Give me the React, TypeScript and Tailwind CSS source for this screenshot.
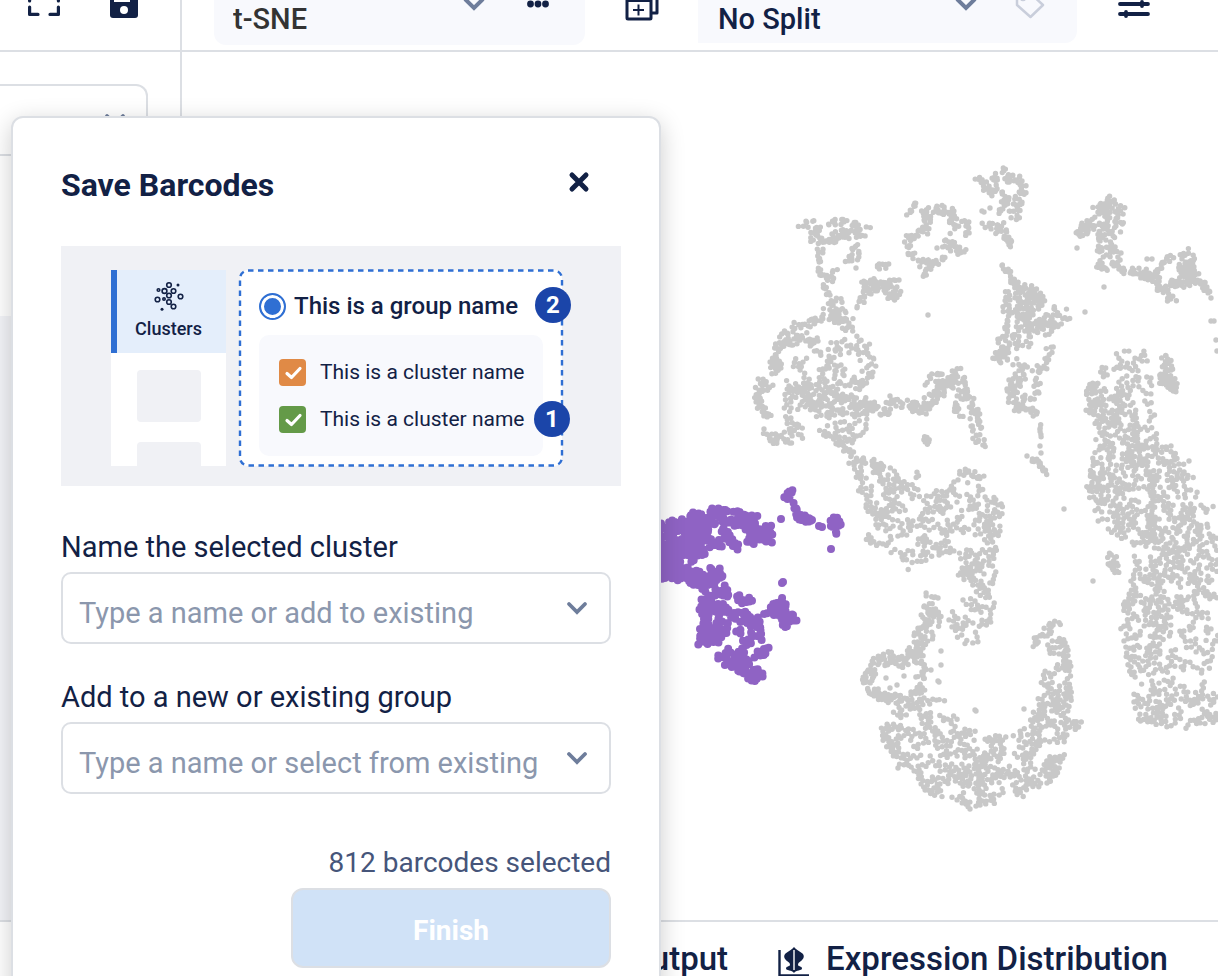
import React from "react";

type Pt = [number, number];
type Shape =
  | { kind: "area"; pts: Pt[]; n: number }
  | { kind: "line"; pts: Pt[]; w: number; n: number };

const area = (n: number, ...pts: Pt[]): Shape => ({ kind: "area", pts, n });
const line = (n: number, w: number, ...pts: Pt[]): Shape => ({ kind: "line", pts, w, n });

function makeRandom(seed: number) {
  let s = seed;
  return () => {
    s = (s + 0x6d2b79f5) | 0;
    let t = Math.imul(s ^ (s >>> 15), 1 | s);
    t = (t + Math.imul(t ^ (t >>> 7), 61 | t)) ^ t;
    return ((t ^ (t >>> 14)) >>> 0) / 4294967296;
  };
}

function inside(x: number, y: number, pts: Pt[]) {
  let hit = false;
  for (let i = 0, j = pts.length - 1; i < pts.length; j = i++) {
    const [xi, yi] = pts[i];
    const [xj, yj] = pts[j];
    if (yi > y !== yj > y && x < ((xj - xi) * (y - yi)) / (yj - yi) + xi) hit = !hit;
  }
  return hit;
}

/* Areas grow in short chains of neighbouring dots; lines spread dots evenly along their length. */
function scatter(shapes: Shape[], seed: number): Pt[] {
  const rnd = makeRandom(seed);
  const out: Pt[] = [];
  for (const s of shapes) {
    if (s.kind === "area") {
      const xs = s.pts.map((p) => p[0]);
      const ys = s.pts.map((p) => p[1]);
      const x0 = Math.min(...xs), x1 = Math.max(...xs);
      const y0 = Math.min(...ys), y1 = Math.max(...ys);
      const own: Pt[] = [];
      for (let t = 0; own.length < s.n && t < s.n * 20; t++) {
        let x = x0 + rnd() * (x1 - x0);
        let y = y0 + rnd() * (y1 - y0);
        if (own.length > 0 && rnd() < 0.5) {
          const from = own[own.length - 1];
          const angle = rnd() * Math.PI * 2;
          const reach = 3.5 + rnd() * 2;
          x = from[0] + Math.cos(angle) * reach;
          y = from[1] + Math.sin(angle) * reach;
        }
        if (!inside(x, y, s.pts)) continue;
        if (own.some((p) => Math.hypot(p[0] - x, p[1] - y) < 2.6)) continue;
        own.push([x, y]);
      }
      out.push(...own);
    } else {
      const lens = s.pts.slice(1).map((p, i) => Math.hypot(p[0] - s.pts[i][0], p[1] - s.pts[i][1]));
      const total = lens.reduce((a, b) => a + b, 0);
      const count = Math.round(s.n * 1.25);
      const w = s.w * 1.3;
      for (let k = 0; k < count; k++) {
        let d = ((k + rnd()) / count) * total;
        let i = 0;
        while (i < lens.length - 1 && d > lens[i]) d -= lens[i++];
        const f = d / lens[i];
        const a = s.pts[i], b = s.pts[i + 1];
        out.push([
          a[0] + (b[0] - a[0]) * f + (rnd() - 0.5) * w,
          a[1] + (b[1] - a[1]) * f + (rnd() - 0.5) * w,
        ]);
      }
    }
  }
  return out;
}

const toPath = (pts: Pt[]) => pts.map(([x, y]) => `M${x.toFixed(1)} ${y.toFixed(1)}h0`).join("");

const greyShapes: Shape[] = [
  line(18, 5, [978, 176], [985, 186], [991, 193], [1003, 191]),
  line(8, 5, [989, 178], [996, 176], [992, 186]),
  line(4, 3, [1001, 171], [1005, 168]),
  line(38, 8, [1004, 176], [1012, 180], [1023, 183], [1020, 192], [1018, 206], [1013, 218]),
  line(11, 6, [1009, 196], [1001, 213]),
  line(14, 6, [985, 227], [1003, 226]),
  line(16, 7, [997, 229], [1009, 238], [1006, 246]),
  line(18, 7, [801, 224], [818, 226], [822, 236], [808, 237]),
  line(36, 8, [818, 246], [827, 240], [840, 232], [855, 236], [868, 231]),
  line(16, 5, [826, 223], [845, 222], [857, 223], [857, 232]),
  line(14, 6, [855, 246], [856, 258], [848, 259]),
  line(22, 5, [821, 254], [819, 273], [832, 280], [835, 270]),
  line(7, 3, [822, 285], [829, 295]),
  line(9, 3, [908, 213], [917, 202]),
  line(32, 8, [925, 220], [929, 212], [940, 209], [953, 212], [954, 230]),
  line(10, 4, [962, 220], [968, 222], [968, 236]),
  line(24, 8, [947, 242], [955, 248], [965, 250]),
  line(30, 7, [926, 214], [925, 233], [907, 239], [911, 251], [907, 260]),
  line(22, 7, [918, 262], [930, 265], [927, 275]),
  line(9, 5, [930, 266], [945, 258]),
  line(6, 4, [875, 262], [891, 265], [876, 270]),
  line(44, 11, [866, 288], [882, 284], [897, 296]),
  line(6, 3, [882, 281], [896, 282]),
  line(13, 5, [859, 308], [867, 287]),
  line(46, 11, [840, 302], [826, 314], [845, 318], [850, 330]),
  line(38, 7, [818, 320], [795, 327], [780, 343], [774, 358], [774, 376]),
  line(28, 8, [780, 344], [808, 337], [820, 350]),
  area(45, [772, 358], [830, 352], [840, 400], [785, 385]),
  line(68, 12, [832, 346], [865, 348], [870, 370], [862, 388], [840, 376], [830, 352]),
  line(14, 6, [756, 391], [770, 387], [757, 378]),
  line(24, 7, [757, 392], [762, 408], [768, 418]),
  area(62, [785, 382], [825, 384], [845, 390], [845, 400], [800, 414], [783, 414]),
  area(58, [800, 395], [845, 390], [880, 400], [880, 415], [820, 418]),
  line(36, 9, [767, 432], [780, 442], [798, 433], [788, 418]),
  area(52, [815, 414], [870, 402], [868, 432], [850, 445], [820, 436]),
  line(32, 9, [836, 440], [852, 458], [870, 465], [885, 470]),
  line(28, 7, [860, 404], [885, 412], [890, 399], [898, 403]),
  line(26, 9, [905, 403], [912, 408], [932, 409]),
  line(32, 10, [929, 380], [943, 379], [936, 398], [928, 400]),
  line(66, 9, [945, 392], [959, 372], [963, 388], [974, 406], [975, 425], [982, 446]),
  line(10, 6, [955, 398], [960, 416]),
  line(7, 4, [925, 436], [926, 443], [931, 442]),
  line(13, 4, [1002, 264], [1012, 275], [1012, 286]),
  area(70, [1005, 288], [1013, 280], [1040, 288], [1048, 303], [1030, 318], [1002, 312]),
  line(48, 12, [1035, 330], [1050, 324], [1062, 314]),
  area(32, [1015, 306], [1042, 322], [1036, 348], [1010, 352]),
  line(9, 3, [1008, 314], [1006, 332]),
  line(40, 9, [1010, 336], [1002, 346], [996, 360], [1008, 356]),
  line(24, 6, [1051, 346], [1046, 364], [1036, 372], [1037, 398]),
  line(42, 10, [1018, 364], [1024, 370], [1013, 384], [1012, 398], [1028, 404]),
  line(14, 5, [1015, 409], [1028, 409], [1036, 416]),
  line(5, 2, [1041, 424], [1041, 436]),
  line(11, 4, [1030, 460], [1039, 462], [1046, 474]),
  line(32, 8, [1094, 216], [1105, 204], [1114, 201], [1120, 210], [1120, 230]),
  line(26, 9, [1080, 233], [1086, 228], [1093, 224]),
  line(54, 15, [1106, 208], [1108, 230], [1105, 252], [1112, 260]),
  line(9, 5, [1098, 264], [1106, 268]),
  line(13, 6, [1113, 262], [1124, 274], [1134, 272]),
  line(42, 7, [1133, 272], [1150, 275], [1160, 286], [1173, 298]),
  line(14, 5, [1152, 274], [1165, 262], [1173, 257]),
  line(48, 13, [1186, 256], [1187, 270], [1191, 282]),
  line(13, 6, [1170, 282], [1184, 284]),
  line(20, 6, [1190, 280], [1204, 285], [1207, 294]),
  area(475, [1115, 352], [1138, 344], [1148, 354], [1155, 385], [1155, 430], [1172, 448], [1196, 475], [1198, 505], [1180, 540], [1135, 545], [1110, 535], [1092, 515], [1085, 490], [1090, 470], [1094, 435], [1083, 405], [1090, 375]),
  area(30, [1085, 385], [1106, 380], [1106, 410], [1088, 412]),
  area(30, [1085, 470], [1112, 450], [1112, 505], [1090, 505]),
  line(34, 8, [1160, 378], [1170, 380], [1175, 388]),
  line(30, 8, [1165, 358], [1168, 368], [1172, 390]),
  area(565, [1150, 520], [1218, 500], [1218, 725], [1155, 732], [1135, 720], [1132, 690], [1125, 650], [1118, 622], [1134, 570], [1134, 540]),
  line(15, 7, [1111, 555], [1117, 572]),
  area(430, [853, 462], [875, 460], [900, 457], [920, 470], [930, 490], [960, 478], [995, 490], [1005, 512], [998, 545], [998, 585], [986, 646], [960, 645], [948, 630], [950, 602], [974, 592], [955, 572], [958, 552], [940, 555], [910, 577], [903, 565], [885, 550], [862, 543], [876, 525], [860, 498]),
  line(14, 5, [960, 471], [970, 474], [982, 477]),
  line(38, 9, [929, 594], [930, 615], [915, 635], [921, 650]),
  area(24, [925, 612], [940, 600], [942, 630], [920, 656]),
  line(60, 9, [868, 682], [874, 666], [890, 656], [900, 664], [912, 652]),
  line(40, 8, [868, 684], [880, 697], [905, 700]),
  line(30, 9, [918, 650], [922, 670], [918, 692]),
  area(590, [910, 692], [945, 693], [962, 727], [985, 732], [1008, 735], [1030, 722], [1040, 688], [1046, 652], [1046, 622], [1056, 618], [1072, 658], [1072, 690], [1070, 735], [1060, 772], [1045, 790], [1002, 806], [965, 808], [925, 793], [900, 765], [880, 740], [880, 725], [892, 712]),
  line(20, 6, [1034, 643], [1050, 628], [1058, 622]),
  line(9, 6, [1074, 727], [1080, 723]),
];

const greySingles: Pt[] = [
  [982, 211], [984, 212], [990, 208], [937, 248], [928, 315], [1077, 248], [1104, 287], [1085, 312], [1211, 298],
  [1211, 321], [1214, 321], [1216, 340], [1217, 351], [1040, 446], [1041, 453], [1027, 456], [1064, 509], [1093, 581],
  [1147, 259], [1152, 259], [975, 710], [976, 711], [1024, 709], [1189, 461], [856, 268], [899, 280],
  [1157, 271], [1121, 253], [963, 600], [898, 768], [970, 809], [1166, 447], [1171, 446], [938, 598],
  [941, 651], [941, 665], [938, 681], [931, 670], [886, 678], [890, 688], [897, 685], [904, 676], [939, 682],
];

const violetShapes: Shape[] = [
  line(105, 14, [660, 532], [685, 525], [707, 515], [730, 518], [750, 522], [768, 532]),
  line(90, 19, [697, 525], [696, 545], [680, 552]),
  line(70, 15, [664, 540], [666, 555], [666, 572]),
  line(26, 10, [672, 572], [684, 572], [684, 582]),
  line(40, 12, [690, 570], [700, 580], [710, 580], [722, 570]),
  line(9, 6, [722, 588], [727, 594]),
  line(9, 4, [736, 597], [742, 601], [752, 599]),
  line(16, 6, [724, 528], [730, 543], [736, 546]),
  line(24, 8, [750, 542], [758, 534], [770, 538]),
  line(8, 8, [713, 542], [718, 546]),
  line(36, 10, [710, 588], [706, 610], [704, 640]),
  area(105, [700, 605], [715, 596], [730, 608], [750, 610], [758, 612], [768, 614], [765, 635], [755, 650], [750, 662], [748, 674], [732, 668], [712, 660], [700, 645]),
  line(10, 5, [757, 655], [767, 650]),
  line(26, 9, [740, 665], [750, 672], [758, 676], [753, 681]),
  line(36, 8, [769, 611], [781, 606], [783, 622], [795, 616]),
  line(4, 2, [782, 598], [782, 606]),
  line(10, 5, [786, 499], [791, 492]),
  line(20, 3, [793, 504], [798, 514], [812, 521], [796, 518]),
  line(14, 6, [831, 524], [837, 521], [835, 532]),
];
const violetSingles: Pt[] = [[783, 582], [782, 583], [781, 519], [831, 549], [819, 526], [822, 527]];

const greyPath = toPath([...scatter(greyShapes, 7), ...greySingles]);
const violetPath = toPath([...scatter(violetShapes, 21), ...violetSingles]);

function Chevron({ className }: { className?: string }) {
  return (
    <svg viewBox="0 0 22 14" className={className} fill="none" stroke="currentColor" strokeWidth="4" aria-hidden="true">
      <path d="M2 2l9 9 9-9" />
    </svg>
  );
}

function RoundChevron() {
  return (
    <svg width="22" height="16" viewBox="0 0 22 16" fill="none" stroke="#6e7d9b" strokeWidth="3.800" strokeLinecap="round" aria-hidden="true">
      <path d="M3 4l8 8 8-8" />
    </svg>
  );
}

function Header() {
  return (
    <header className="flex h-[52px] shrink-0 items-end overflow-hidden border-b-2 border-[#dcdfe4]">
      <div className="flex h-full w-[182px] shrink-0 items-end gap-[50px] border-r-2 border-[#dcdfe4] pl-7">
        <button aria-label="Fit to screen" className="mb-[34px]">
          <svg width="32" height="32" viewBox="0 0 32 32" fill="none" stroke="#122145" strokeWidth="3.200" strokeLinecap="round" strokeLinejoin="round">
            <path d="M1.600 9V1.600H9M23 1.600h7.400V9M30.400 23v7.400H22M10 30.400H1.600V23" />
            <path d="M1.600 16v1M30.400 16v1" />
          </svg>
        </button>
        <button aria-label="Save" className="mb-8">
          <svg width="28" height="28" viewBox="0 0 28 28">
            <path d="M3 0h17l8 8v17a3 3 0 0 1-3 3H3a3 3 0 0 1-3-3V3a3 3 0 0 1 3-3z" fill="#122145" />
            <path d="M4 5h16v7H4z" fill="#fff" />
            <circle cx="14" cy="20" r="4" fill="#fff" />
          </svg>
        </button>
      </div>
      <div className="ml-8 mb-[5px] flex h-[74px] w-[371px] shrink-0 items-end rounded-[12px] bg-[#f8f9fd] pl-[19px] pr-9">
        <select aria-label="Projection" className="mb-[9px] h-[34px] min-w-0 flex-1 appearance-none text-[29px] leading-[34px] font-medium text-[#333333]">
          <option>t-SNE</option>
        </select>
        <Chevron className="mb-[34px] h-[14px] w-[22px] text-[#6e7d9b]" />
        <button aria-label="More options" className="mb-[37px] ml-[42px]">
          <svg width="22" height="8" viewBox="0 0 22 8" fill="#122145">
            <circle cx="3.500" cy="4" r="3.400" />
            <circle cx="11" cy="4" r="3.400" />
            <circle cx="18.500" cy="4" r="3.400" />
          </svg>
        </button>
      </div>
      <button aria-label="Add window" className="mb-[29px] ml-10 shrink-0">
        <svg width="34" height="34" viewBox="0 0 34 34" fill="none" stroke="#122145" strokeWidth="3" strokeLinejoin="round">
          <path d="M8 6V2h24v24h-5" />
          <rect x="2" y="8" width="24" height="24" rx="1" />
          <path d="M2 12.500h24" strokeWidth="5" />
          <path d="M13.500 17.500v11M8 23h11" strokeWidth="2" />
        </svg>
      </button>
      <div className="mb-[7px] ml-[39px] flex h-[74px] w-[379px] shrink-0 items-end rounded-r-[12px] bg-[#f8f9fd] pl-5 pr-8">
        <select aria-label="Split by" className="mb-[7px] h-[34px] min-w-0 flex-1 appearance-none text-[29px] leading-[34px] font-medium text-[#122145]">
          <option>No Split</option>
        </select>
        <Chevron className="mb-8 h-[14px] w-[22px] text-[#6e7d9b]" />
        <button aria-label="Label" className="mb-6 ml-[38px]">
          <svg width="30" height="30" viewBox="0 0 30 30" fill="none" stroke="#c9cedb" strokeWidth="2.500" strokeLinejoin="round">
            <path d="M2 3h12l14 13-12.500 12L2 16z" />
            <circle cx="8" cy="9" r="2" />
          </svg>
        </button>
      </div>
      <button aria-label="Display settings" className="mb-8 ml-[41px] shrink-0">
        <svg width="32" height="30" viewBox="0 0 32 30" fill="none" stroke="#122145" strokeWidth="3.800" strokeLinecap="round">
          <path d="M2 6h28M2 16h28M2 26h28" />
          <path d="M8 4v4M24 14v4M8 24v4" />
        </svg>
      </button>
    </header>
  );
}

function Sidebar() {
  return (
    <aside className="flex w-[182px] shrink-0 flex-col border-r-2 border-[#dcdfe4]">
      <div className="mt-8 mr-8 flex h-[72px] items-center justify-end rounded-tr-[12px] border-2 border-l-0 border-[#dcdfe4] pr-5">
        <RoundChevron />
      </div>
      <div className="mt-40 flex-1 bg-[#f3f4f8]" />
    </aside>
  );
}

function ClustersIcon() {
  return (
    <svg width="30" height="30" viewBox="0 0 30 30" fill="none" stroke="#122145" strokeWidth="1.600" aria-hidden="true">
      <circle cx="15" cy="4" r="2.300" />
      <circle cx="10.500" cy="10" r="2.400" />
      <circle cx="19.500" cy="10" r="2.300" />
      <circle cx="15" cy="14.500" r="2.300" />
      <circle cx="26.500" cy="15.500" r="2.300" />
      <circle cx="3.500" cy="18.500" r="2.300" />
      <circle cx="15" cy="21" r="2.300" />
      <circle cx="19.500" cy="25.500" r="2.300" />
      <circle cx="4.500" cy="9" r="1.300" />
      <circle cx="10" cy="18" r="1.200" />
      <circle cx="24" cy="4" r="1.500" fill="#122145" stroke="none" />
      <circle cx="8" cy="28.300" r="1.500" fill="#122145" stroke="none" />
    </svg>
  );
}

function ClusterRow({ color }: { color: string }) {
  return (
    <label className="flex h-7 items-center gap-[14px] whitespace-nowrap text-[21px] leading-7 text-[#122145]">
      <span className="grid h-[27px] w-[27px] shrink-0">
        <input type="checkbox" defaultChecked className={`col-start-1 row-start-1 h-[27px] w-[27px] appearance-none rounded-[4px] ${color}`} />
        <svg viewBox="0 0 27 27" className="pointer-events-none col-start-1 row-start-1" fill="none" stroke="#fff" strokeWidth="3.200" strokeLinecap="round" strokeLinejoin="round" aria-hidden="true">
          <path d="M8 14.500l4.500 4L21 9.500" />
        </svg>
      </span>
      This is a cluster name
    </label>
  );
}

function Illustration() {
  return (
    <div className="-mr-[10px] flex h-60 gap-[14px] bg-[#f0f1f5] px-[50px] pt-6">
      <div className="flex h-[196px] w-[115px] shrink-0 flex-col items-center overflow-hidden bg-white">
        <div className="flex h-[83px] w-full shrink-0 flex-col items-center border-l-[6px] border-[#2f6fd3] bg-[#e4eefb] pt-[11px] pr-[6px]">
          <ClustersIcon />
          <span className="mt-2 text-[18px] leading-5 font-medium text-[#122145]">Clusters</span>
        </div>
        <div className="mt-[17px] h-[52px] w-16 shrink-0 rounded-[4px] bg-[#f0f1f5]" />
        <div className="mt-5 h-[52px] w-16 shrink-0 rounded-[4px] bg-[#f0f1f5]" />
      </div>
      <div className="relative h-[196px] w-[322px] shrink-0 rounded-[8px] bg-white px-[19px] pt-5">
        <svg className="pointer-events-none absolute inset-0 h-full w-full overflow-visible" fill="none" aria-hidden="true">
          <rect x="0" y="0.500" width="100%" height="99.500%" rx="8" stroke="#2f6fd3" strokeWidth="2.400" strokeDasharray="5.500 4.500" />
        </svg>
        <label className="flex h-8 items-center gap-2 whitespace-nowrap text-[24px] leading-8 font-medium text-[#122145]">
          <input type="radio" defaultChecked className="h-[27px] w-[27px] shrink-0 appearance-none rounded-full border-2 border-[#2f6fd3] bg-[#2f6fd3] shadow-[inset_0_0_0_3px_white]" />
          This is a group name
        </label>
        <div className="mt-[13px] flex h-[121px] flex-col gap-[19px] rounded-[10px] bg-[#f8f9fd] px-5 pt-[23px]">
          <ClusterRow color="bg-[#e08a46]" />
          <ClusterRow color="bg-[#649a48]" />
        </div>
        <span className="absolute top-[17px] -right-[9px] grid h-9 w-9 place-items-center rounded-full bg-[#1b45a9] text-[24px] leading-6 font-bold text-white">2</span>
        <span className="absolute top-[131px] -right-2 grid h-9 w-9 place-items-center rounded-full bg-[#1b45a9] text-[24px] leading-6 font-bold text-white">1</span>
      </div>
    </div>
  );
}

function ComboField({ id, label, placeholder }: { id: string; label: string; placeholder: string }) {
  return (
    <div className="flex flex-col gap-[7px]">
      <label htmlFor={id} className="text-[29px] leading-9 text-[#122145]">{label}</label>
      <div className="flex h-[72px] items-center rounded-[10px] border-2 border-[#dcdfe4] bg-white pl-4 pr-[21px]">
        <input id={id} placeholder={placeholder} className="h-full min-w-0 flex-1 bg-transparent pt-[10px] text-[29px] text-[#122145] outline-none placeholder:text-[#8b97ad]" />
        <button type="button" aria-label={`Show options: ${label}`}>
          <RoundChevron />
        </button>
      </div>
    </div>
  );
}

function SaveDialog() {
  return (
    <section role="dialog" aria-labelledby="save-title" className="absolute top-[116px] left-[11px] w-[650px] rounded-[12px] border-2 border-[#dcdfe4] bg-white px-12 pt-[47px] pb-12 shadow-[0_6px_24px_rgba(0,0,0,0.2)]">
      <div className="flex h-10 items-start justify-between pr-[21px]">
        <h2 id="save-title" className="text-[32px] leading-10 font-bold text-[#122145]">Save Barcodes</h2>
        <button aria-label="Close" className="mt-[6px]">
          <svg width="22" height="22" viewBox="0 0 22 22" fill="none" stroke="#122145" strokeWidth="5" strokeLinecap="round">
            <path d="M4 4l14 14M18 4L4 18" />
          </svg>
        </button>
      </div>
      <div className="mt-[41px]">
        <Illustration />
      </div>
      <form className="mt-[43px] flex flex-col gap-[35px]">
        <ComboField id="cluster" label="Name the selected cluster" placeholder="Type a name or add to existing" />
        <ComboField id="group" label="Add to a new or existing group" placeholder="Type a name or select from existing" />
        <div className="mt-4 flex flex-col items-end gap-[7px]">
          <p className="text-[28px] leading-9 text-[#46557a]">812 barcodes selected</p>
          <button type="button" disabled className="h-20 w-80 rounded-[12px] border-2 border-[#dcdfe4] bg-[#d0e2f7] pt-[6px] text-[28px] leading-9 font-bold text-white">Finish</button>
        </div>
      </form>
    </section>
  );
}

function BottomTabs() {
  return (
    <nav className="flex h-14 shrink-0 items-start overflow-hidden border-t-2 border-[#dcdfe4] pt-[17px] pr-[50px] text-[33px] leading-10 font-medium whitespace-nowrap text-[#122145]">
      <div className="flex flex-1 justify-end gap-[50px]">
        <a href="#output">Output</a>
        <a href="#distribution" className="flex gap-4">
          <svg width="32" height="32" viewBox="0 0 32 32" className="mt-2" aria-hidden="true">
            <path d="M1.500 3v25.500H31" fill="none" stroke="#122145" strokeWidth="2.400" />
            <path d="M16 0c2 3 5 3.500 8.500 6.500 2.500 2.500 1 5.500-1.500 7.500-2 1.500-3 2-3 4 0 1.500 4 1 4 3.500s-6 1-8 4.500c-2-3.500-8-2-8-4.500s4-2 4-3.500c0-2-1-2.500-3-4-2.500-2-4-5-1.500-7.500C11 3.500 14 3 16 0z" fill="#122145" />
            <path d="M16 3v20" stroke="#fff" strokeWidth="1.400" />
          </svg>
          Expression Distribution
        </a>
      </div>
    </nav>
  );
}

export default function App() {
  return (
    <div className="relative flex h-screen flex-col overflow-hidden bg-white font-[Roboto,'Liberation_Sans',sans-serif]">
      <Header />
      <div className="flex min-h-0 flex-1">
        <Sidebar />
        <main className="min-w-0 flex-1">
          <svg className="h-full w-full" viewBox="182 52 1036 868" preserveAspectRatio="xMidYMid slice" fill="none" strokeLinecap="round" role="img" aria-label="t-SNE projection with 812 selected barcodes">
            <path d={greyPath} stroke="#c8c8c8" strokeWidth="5.400" />
            <path d={violetPath} stroke="#8f63c4" strokeWidth="8" />
          </svg>
        </main>
      </div>
      <BottomTabs />
      <SaveDialog />
    </div>
  );
}
